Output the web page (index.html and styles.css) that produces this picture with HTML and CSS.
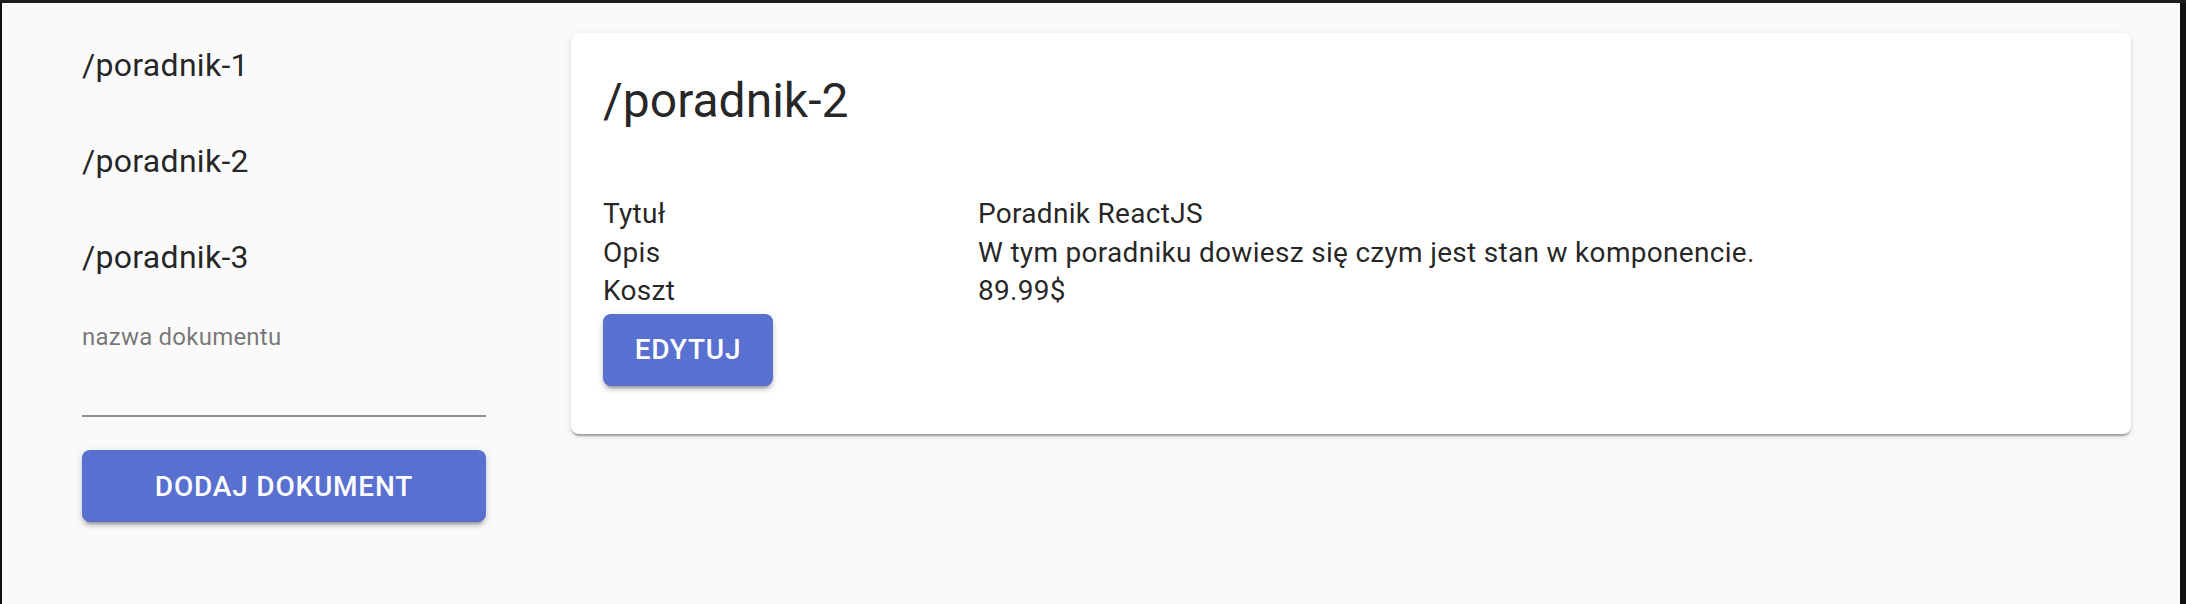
FILE: index.html
```html
<!DOCTYPE html>
<html lang="pl">
<head>
<meta charset="utf-8">
<title>Poradniki</title>
<link rel="stylesheet" href="styles.css">
</head>
<body>
<div class="topbar"></div>
<div class="frame">
  <div class="layout">
    <aside class="sidebar">
      <nav class="nav">
        <div class="nav-item">/poradnik-1</div>
        <div class="nav-item">/poradnik-2</div>
        <div class="nav-item">/poradnik-3</div>
      </nav>
      <div class="field">
        <label class="field-label">nazwa dokumentu</label>
        <div class="field-input"></div>
      </div>
      <button class="btn btn-wide">DODAJ DOKUMENT</button>
    </aside>
    <main class="card">
      <h2 class="card-title">/poradnik-2</h2>
      <div class="details">
        <div class="details-label">Tytuł</div><div class="details-value">Poradnik ReactJS</div>
        <div class="details-label">Opis</div><div class="details-value">W tym poradniku dowiesz się czym jest stan w komponencie.</div>
        <div class="details-label">Koszt</div><div class="details-value">89.99$</div>
      </div>
      <button class="btn btn-edit">EDYTUJ</button>
    </main>
  </div>
  <div class="rightstrip"></div>
</div>
</body>
</html>
```

FILE: styles.css
```css
html, body {
  margin: 0;
  padding: 0;
  height: 100%;
}
body {
  background: #fafafa;
  font-family: Roboto, "Liberation Sans", sans-serif;
  color: rgba(0, 0, 0, 0.87);
  overflow: hidden;
}
.topbar {
  height: 3px;
  background: #1e1e1e;
}
.frame {
  display: flex;
  height: 601px;
  border-left: 2px solid #111;
}
.layout {
  flex: 1;
  display: flex;
  align-items: flex-start;
  gap: 85px;
  padding: 0 49px 0 80px;
}
.rightstrip {
  width: 6px;
  background: #111;
}
.sidebar {
  width: 404px;
  flex: none;
  padding-top: 14px;
}
.nav-item {
  font-size: 32px;
  line-height: 48px;
  letter-spacing: 0.00938em;
  padding: 24px 0;
}
.field {
  margin-top: 16px;
}
.field-label {
  display: block;
  font-size: 24px;
  line-height: 32px;
  letter-spacing: 0.00938em;
  color: rgba(0, 0, 0, 0.54);
}
.field-input {
  height: 62px;
  border-bottom: 2px solid rgba(0, 0, 0, 0.42);
}
.btn {
  display: flex;
  align-items: center;
  justify-content: center;
  height: 72px;
  border: 0;
  border-radius: 8px;
  background: #5870cf;
  color: #fff;
  font-family: Roboto, "Liberation Sans", sans-serif;
  font-size: 28px;
  font-weight: 500;
  letter-spacing: 0.8px;
  padding: 0 32px;
  box-shadow: 0 6px 2px -4px rgba(0, 0, 0, 0.2), 0 4px 4px 0 rgba(0, 0, 0, 0.14), 0 2px 10px 0 rgba(0, 0, 0, 0.12);
}
.btn-wide {
  width: 404px;
  margin-top: 33px;
}
.btn-edit {
  width: 170px;
  margin-top: 3px;
}
.card {
  flex: 1;
  margin-top: 30px;
  background: #fff;
  border-radius: 8px;
  padding: 36px 32px 48px;
  box-shadow: 0 4px 2px -2px rgba(0, 0, 0, 0.2), 0 2px 2px 0 rgba(0, 0, 0, 0.14), 0 2px 6px 0 rgba(0, 0, 0, 0.12);
}
.card-title {
  margin: 0;
  font-size: 48px;
  font-weight: 400;
  line-height: 64px;
}
.details {
  display: grid;
  grid-template-columns: 375px 1fr;
  margin-top: 62px;
  font-size: 28px;
  line-height: 38.5px;
  letter-spacing: 0.01071em;
}
```
